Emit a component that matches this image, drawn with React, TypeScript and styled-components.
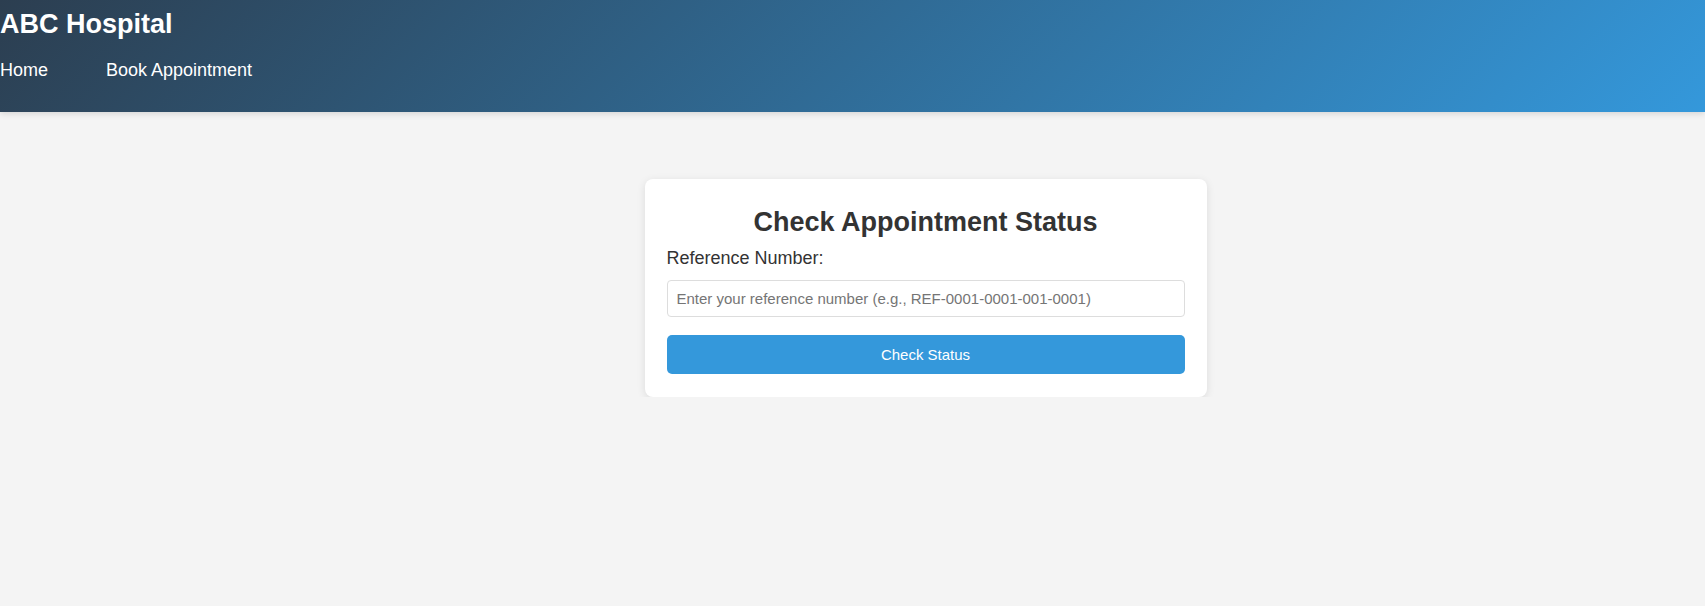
import React, { FC, useState } from 'react';
import styled, { createGlobalStyle } from 'styled-components';

const GlobalStyle = createGlobalStyle`
    body {
        margin:0;
        background-color:#f4f4f4;
        font-family:"Liberation Sans", Arial, sans-serif;
    }
`;

const Header = styled.header`
    box-sizing:border-box;
    height:112px;
    padding-top:9px;
    background:linear-gradient(135deg, #2c3e50, #3498db);
    color:#fff;
    box-shadow:0px 2px 6px rgba(0,0,0,0.12);
    position:relative;
`;

const Logo = styled.h1`
    margin:0;
    font-size:27px;
    line-height:31px;
    font-weight:bold;
`;

const Nav = styled.nav`
    display:flex;
    gap:58px;
    margin-top:20px;
`;

const NavLink = styled.a`
    color:#fff;
    text-decoration:none;
    font-size:18px;
    line-height:20px;
    cursor:pointer;
`;

const Main = styled.main`
    display:flex;
    justify-content:center;
    padding:67px 0 0 146px;
`;

const Card = styled.div`
    box-sizing:border-box;
    width:562px;
    padding:28px 22px 23px 22px;
    background-color:#fff;
    border-radius:8px;
    box-shadow:0px 2px 8px rgba(0,0,0,0.1);
    display:flex;
    flex-direction:column;
`;

const Title = styled.h2`
    margin:0;
    text-align:center;
    color:#333;
    font-size:27px;
    line-height:31px;
    font-weight:bold;
`;

const Label = styled.label`
    margin-top:10px;
    color:#333;
    font-size:18px;
    line-height:21px;
`;

const Input = styled.input`
    box-sizing:border-box;
    margin-top:11px;
    height:37px;
    width:100%;
    padding:0 9px;
    border:1px solid #ddd;
    border-radius:4px;
    font-family:inherit;
    font-size:15px;
    color:#333;
    outline:none;
    &::placeholder {
        color:#757575;
    }
`;

const Button = styled.button`
    box-sizing:border-box;
    margin-top:18px;
    height:39px;
    width:100%;
    border:none;
    border-radius:5px;
    background-color:#3498db;
    color:#fff;
    font-family:inherit;
    font-size:15px;
    cursor:pointer;
`;

export const App: FC = () => {
    const [reference, setReference] = useState('');

    return(
        <>
            <GlobalStyle/>
            <Header>
                <Logo>ABC Hospital</Logo>
                <Nav>
                    <NavLink>Home</NavLink>
                    <NavLink>Book Appointment</NavLink>
                </Nav>
            </Header>
            <Main>
                <Card>
                    <Title>Check Appointment Status</Title>
                    <Label htmlFor="reference">Reference Number:</Label>
                    <Input
                        id="reference"
                        value={reference}
                        onChange={(e) => setReference(e.target.value)}
                        placeholder="Enter your reference number (e.g., REF-0001-0001-001-0001)"
                    />
                    <Button>Check Status</Button>
                </Card>
            </Main>
        </>
    );
};

export default App;
